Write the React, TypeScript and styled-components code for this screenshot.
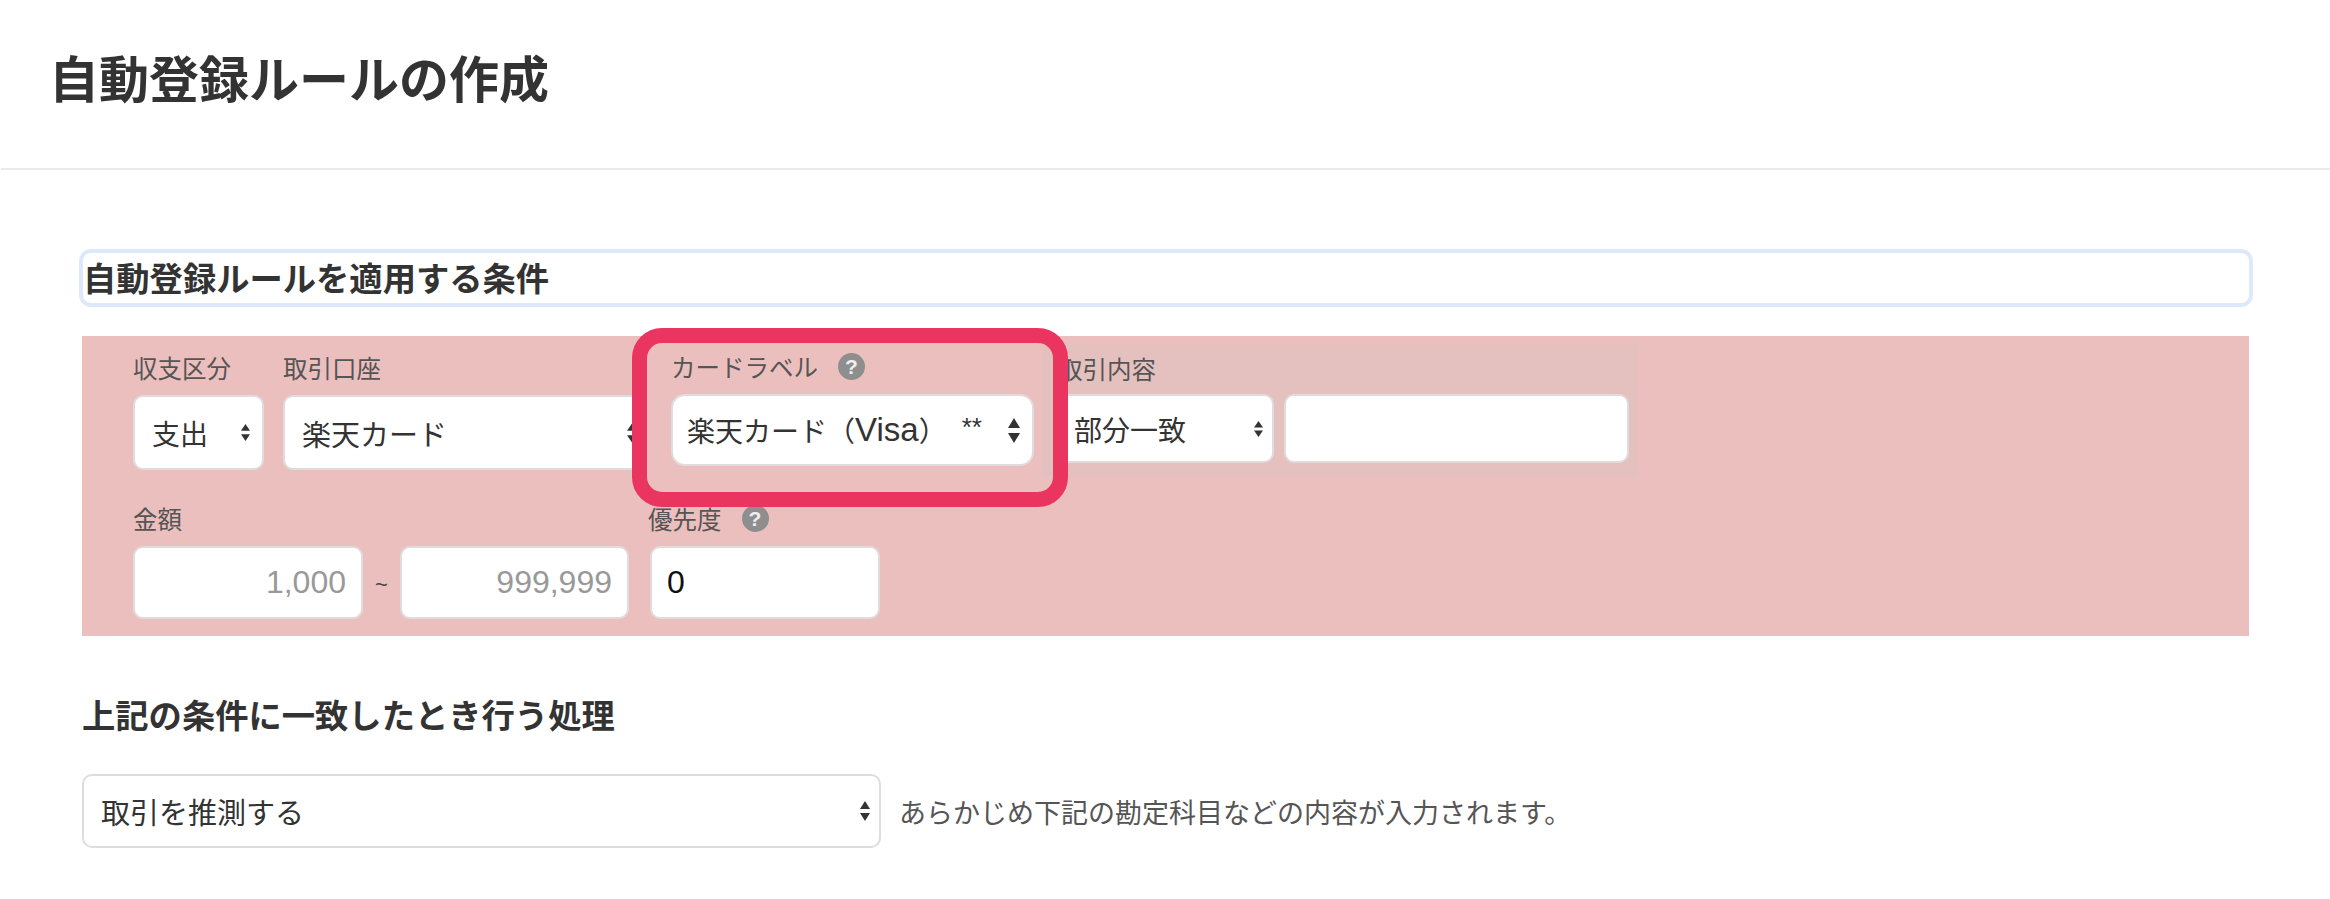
import React from "react";
import styled, { createGlobalStyle } from "styled-components";

const Global = createGlobalStyle`
  html, body { margin: 0; padding: 0; background: #fff; }
  body {
    width: 2330px; height: 899px; overflow: hidden;
    font-family: "Liberation Sans", "Noto Sans CJK JP", sans-serif;
    color: #333;
  }
`;

const Header = styled.header`
  height: 168px;
  border-bottom: 2px solid #eaeaea;
  margin-left: 1px;
  display: flex;
  align-items: center;
  padding-left: 48px;
`;
const Title = styled.h1`
  margin: 0 0 6px;
  font-size: 50px;
  line-height: 60px;
  font-weight: 700;
  color: #333;
`;
const Main = styled.main`
  padding: 83px 81px 0 82px;
`;
const Heading = styled.h2`
  margin: 0 0 33px 1px;
  height: 50px;
  line-height: 54px;
  font-size: 33.3px;
  font-weight: 700;
  border-radius: 8px;
  box-shadow: 0 0 0 4px #dde8fb;
  color: #333;
`;
const Panel = styled.section`
  position: relative;
  height: 300px;
  background: #ecbfbf;
  box-sizing: border-box;
  padding: 9px 0 0 51px;
`;
const Row = styled.div<{ $mt?: number }>`
  display: flex;
  align-items: flex-start;
  margin-top: ${(p) => p.$mt ?? 0}px;
`;
const Field = styled.div<{ $w: number; $ml?: number; $pt?: number }>`
  width: ${(p) => p.$w}px;
  margin-left: ${(p) => p.$ml ?? 0}px;
  padding-top: ${(p) => p.$pt ?? 0}px;
  flex: none;
`;
const Highlight = styled.div`
  margin-left: 8px;
  width: 596px;
  height: 132px;
  box-sizing: border-box;
  padding: 8px 9px 0 16px;
  background: #e4c1be;
  flex: none;
`;
const Label = styled.div<{ $mb?: number; $ml?: number }>`
  display: flex;
  align-items: center;
  gap: 20px;
  height: 30px;
  margin-bottom: ${(p) => p.$mb ?? 13}px;
  margin-left: ${(p) => p.$ml ?? 0}px;
  font-size: 24.5px;
  color: #555;
  white-space: nowrap;
`;
const Help = styled.span`
  width: 27px;
  height: 27px;
  border-radius: 50%;
  background: #8e8e8e;
  color: #eee;
  font-size: 21px;
  font-weight: 700;
  line-height: 27px;
  text-align: center;
`;
const Control = styled.div<{
  $h: number;
  $w?: number;
  $pl?: number;
  $pr?: number;
  $size?: number;
  $radius?: number;
  $ml?: number;
  $align?: string;
  $color?: string;
}>`
  box-sizing: border-box;
  width: ${(p) => (p.$w ? `${p.$w}px` : "100%")};
  height: ${(p) => p.$h}px;
  margin-left: ${(p) => p.$ml ?? 0}px;
  display: flex;
  align-items: center;
  justify-content: ${(p) => p.$align ?? "space-between"};
  background: #fff;
  border: 2px solid #e0dcdc;
  border-radius: ${(p) => p.$radius ?? 10}px;
  padding: 0 ${(p) => p.$pr ?? 14}px 0 ${(p) => p.$pl ?? 14}px;
  font-size: ${(p) => p.$size ?? 28}px;
  color: ${(p) => p.$color ?? "#333"};
  white-space: nowrap;
  flex: none;
`;
const Latin = styled.span`
  font-size: 33px;
`;
const Stars = styled.span`
  font-size: 26px;
  margin-left: auto;
  margin-right: 26px;
  margin-bottom: 6px;
`;
const Tilde = styled.span`
  width: 37px;
  flex: none;
  text-align: center;
  align-self: center;
  font-size: 22px;
  color: #444;
  padding-top: 4px;
`;
const FieldsLine = styled.div`
  display: flex;
`;
const Frame = styled.div`
  position: absolute;
  left: 550px;
  top: -8px;
  width: 436px;
  height: 179px;
  box-sizing: border-box;
  border: 15px solid #e93560;
  border-radius: 30px;
  pointer-events: none;
`;
const SubTitle = styled.h2`
  margin: 60px 0 37px;
  font-size: 33.3px;
  line-height: 41px;
  font-weight: 700;
  color: #333;
`;
const ActionRow = styled.div`
  display: flex;
  align-items: center;
`;
const Note = styled.span`
  margin-left: 18px;
  font-size: 27px;
  color: #555;
  white-space: nowrap;
`;

const Arrows = ({ w, h }: { w: number; h: number }) => (
  <svg width={w} height={h} viewBox="0 0 10 20" preserveAspectRatio="none" style={{ flex: "none" }}>
    <path d="M5 0 L10 8 L0 8 Z M0 12 L10 12 L5 20 Z" fill="#333" />
  </svg>
);

export default function App() {
  return (
    <>
      <Global />
      <Header>
        <Title>自動登録ルールの作成</Title>
      </Header>
      <Main>
        <Heading>自動登録ルールを適用する条件</Heading>
        <Panel>
          <Row>
            <Field $w={131} $pt={7}>
              <Label>収支区分</Label>
              <Control $h={75} $pl={17} $pr={12}>
                支出
                <Arrows w={9} h={17} />
              </Control>
            </Field>
            <Field $w={367} $ml={19} $pt={7}>
              <Label>取引口座</Label>
              <Control $h={75} $w={364} $pl={17} $pr={6} $size={29}>
                楽天カード
                <Arrows w={12} h={22} />
              </Control>
            </Field>
            <Field $w={363} $ml={21} $pt={6}>
              <Label>
                カードラベル
                <Help>?</Help>
              </Label>
              <Control $h={72} $pl={14} $pr={12} $radius={14}>
                楽天カード（<Latin>Visa</Latin>）
                <Stars>**</Stars>
                <Arrows w={12} h={25} />
              </Control>
            </Field>
            <Highlight>
              <Label $mb={11}>取引内容</Label>
              <FieldsLine>
                <Control $h={69} $w={216} $pl={14} $pr={9}>
                  部分一致
                  <Arrows w={9} h={16} />
                </Control>
                <Control $h={69} $w={345} $ml={10} />
              </FieldsLine>
            </Highlight>
          </Row>
          <Row $mt={26}>
            <Field $w={515}>
              <Label>金額</Label>
              <FieldsLine>
                <Control $h={73} $w={230} $align="flex-end" $pr={15} $size={32} $color="#999">
                  1,000
                </Control>
                <Tilde>~</Tilde>
                <Control $h={73} $w={229} $align="flex-end" $pr={15} $size={32} $color="#999">
                  999,999
                </Control>
              </FieldsLine>
            </Field>
            <Field $w={232}>
              <Label>
                優先度
                <Help>?</Help>
              </Label>
              <Control $h={73} $w={230} $ml={2} $align="flex-start" $pl={15} $size={32} $color="#111">
                0
              </Control>
            </Field>
          </Row>
          <Frame />
        </Panel>
        <SubTitle>上記の条件に一致したとき行う処理</SubTitle>
        <ActionRow>
          <Control $h={74} $w={799} $pl={17} $pr={9} $size={29}>
            取引を推測する
            <Arrows w={10} h={20} />
          </Control>
          <Note>あらかじめ下記の勘定科目などの内容が入力されます。</Note>
        </ActionRow>
      </Main>
    </>
  );
}
